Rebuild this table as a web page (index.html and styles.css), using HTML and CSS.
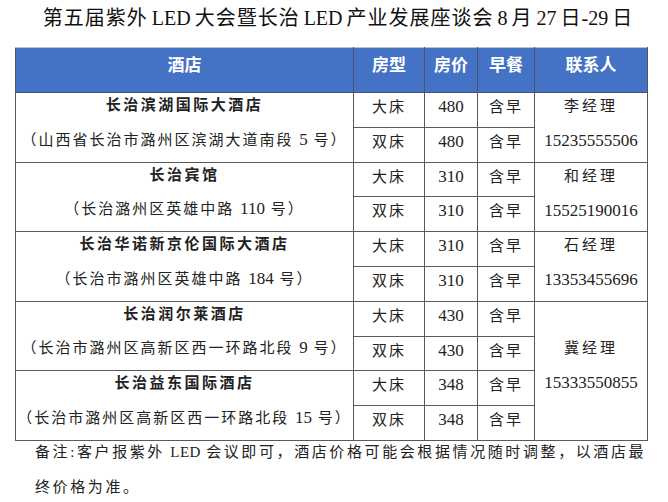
FILE: index.html
```html
<!DOCTYPE html>
<html lang="zh-CN">
<head>
<meta charset="utf-8">
<title>第五届紫外LED大会暨长治LED产业发展座谈会</title>
<link rel="stylesheet" href="styles.css">
</head>
<body>
<div class="page">
  <h1 class="title">第五届紫外<span class="lat"> LED </span>大会暨长治<span class="lat"> LED </span>产业发展座谈会<span class="lat"> 8 </span>月<span class="lat"> 27 </span>日<span class="lat">-29 </span>日</h1>
  <table class="hotels">
    <colgroup>
      <col class="c-hotel"><col class="c-type"><col class="c-price"><col class="c-bf"><col class="c-contact">
    </colgroup>
    <thead>
      <tr><th>酒店</th><th>房型</th><th>房价</th><th>早餐</th><th>联系人</th></tr>
    </thead>
    <tbody>
      <tr>
        <td rowspan="2" class="hotel"><div class="name">长治滨湖国际大酒店</div><div class="addr">（山西省长治市潞州区滨湖大道南段 <span class="num">5</span> 号）</div></td>
        <td>大床</td><td><span class="num">480</span></td><td>含早</td>
        <td rowspan="2" class="contact"><div class="person">李经理</div><div class="phone num">15235555506</div></td>
      </tr>
      <tr><td>双床</td><td><span class="num">480</span></td><td>含早</td></tr>
      <tr>
        <td rowspan="2" class="hotel"><div class="name">长治宾馆</div><div class="addr">（长治潞州区英雄中路 <span class="num">110</span> 号）</div></td>
        <td>大床</td><td><span class="num">310</span></td><td>含早</td>
        <td rowspan="2" class="contact"><div class="person">和经理</div><div class="phone num">15525190016</div></td>
      </tr>
      <tr><td>双床</td><td><span class="num">310</span></td><td>含早</td></tr>
      <tr>
        <td rowspan="2" class="hotel"><div class="name">长治华诺新京伦国际大酒店</div><div class="addr">（长治市潞州区英雄中路 <span class="num">184</span> 号）</div></td>
        <td>大床</td><td><span class="num">310</span></td><td>含早</td>
        <td rowspan="2" class="contact"><div class="person">石经理</div><div class="phone num">13353455696</div></td>
      </tr>
      <tr><td>双床</td><td><span class="num">310</span></td><td>含早</td></tr>
      <tr>
        <td rowspan="2" class="hotel"><div class="name">长治润尔莱酒店</div><div class="addr">（长治市潞州区高新区西一环路北段 <span class="num">9</span> 号）</div></td>
        <td>大床</td><td><span class="num">430</span></td><td>含早</td>
        <td rowspan="4" class="contact contact-tall"><div class="person">冀经理</div><div class="phone num">15333550855</div></td>
      </tr>
      <tr><td>双床</td><td><span class="num">430</span></td><td>含早</td></tr>
      <tr>
        <td rowspan="2" class="hotel"><div class="name">长治益东国际酒店</div><div class="addr">（长治市潞州区高新区西一环路北段 <span class="num">15</span> 号）</div></td>
        <td>大床</td><td><span class="num">348</span></td><td>含早</td>
      </tr>
      <tr><td>双床</td><td><span class="num">348</span></td><td>含早</td></tr>
    </tbody>
  </table>
  <p class="note">备注:客户报紫外<span class="lat-note"> LED </span>会议即可，酒店价格可能会根据情况随时调整，以酒店最<br>终价格为准。</p>
</div>
</body>
</html>
```
FILE: styles.css
```css
html, body {
  margin: 0;
  padding: 0;
  background: #ffffff;
}
body {
  font-family: "Liberation Serif", "Noto Sans CJK SC", serif;
  color: #222222;
}
.page {
  width: 668px;
  height: 502px;
  overflow: hidden;
}
.title {
  margin: 0;
  height: 47px;
  padding-top: 6px;
  padding-left: 8px;
  box-sizing: border-box;
  text-align: center;
  font-size: 20px;
  line-height: 24px;
  font-weight: normal;
  letter-spacing: 1px;
  color: #111111;
}
.lat {
  letter-spacing: 0;
  word-spacing: -1px;
}
.hotels {
  margin-left: 15px;
  width: 632px;
  border-collapse: collapse;
  table-layout: fixed;
}
.c-hotel { width: 338px; }
.c-type { width: 71px; }
.c-price { width: 53px; }
.c-bf { width: 57px; }
.c-contact { width: 113px; }
.hotels th {
  background: #4472c4;
  color: #ffffff;
  font-family: "Noto Sans CJK SC", "Liberation Sans", sans-serif;
  font-weight: bold;
  font-size: 17px;
  line-height: 22px;
  height: 45px;
  box-sizing: border-box;
  padding: 5px 0 0;
  vertical-align: top;
  border: 1px solid #4a5568;
  border-top: 1px solid #c0c0c0;
  text-align: center;
}
.hotels tbody tr {
  height: 34.8px;
}
.hotels td {
  border: 1px solid #5a5a5a;
  padding: 4px 0 0;
  vertical-align: top;
  text-align: center;
  font-size: 15px;
  line-height: 20px;
  letter-spacing: 2px;
  white-space: nowrap;
}
.num {
  font-size: 17px;
  letter-spacing: 0;
}
.hotels td.hotel {
  padding-top: 2px;
}
.name {
  font-weight: bold;
  letter-spacing: 2.5px;
  line-height: 20px;
}
.addr {
  margin-top: 14.5px;
  line-height: 20px;
  letter-spacing: 2px;
}
.hotels td.contact {
  padding-top: 3px;
}
.person {
  line-height: 20px;
  letter-spacing: 3px;
}
.phone {
  margin-top: 15px;
  line-height: 20px;
}
.hotels td.contact-tall {
  padding-top: 36px;
}
.note {
  margin: -6px 0 0;
  padding-left: 35px;
  font-size: 15px;
  line-height: 35px;
  letter-spacing: 2.6px;
  color: #222222;
}
.lat-note {
  letter-spacing: 0.5px;
  word-spacing: 1px;
}
```
